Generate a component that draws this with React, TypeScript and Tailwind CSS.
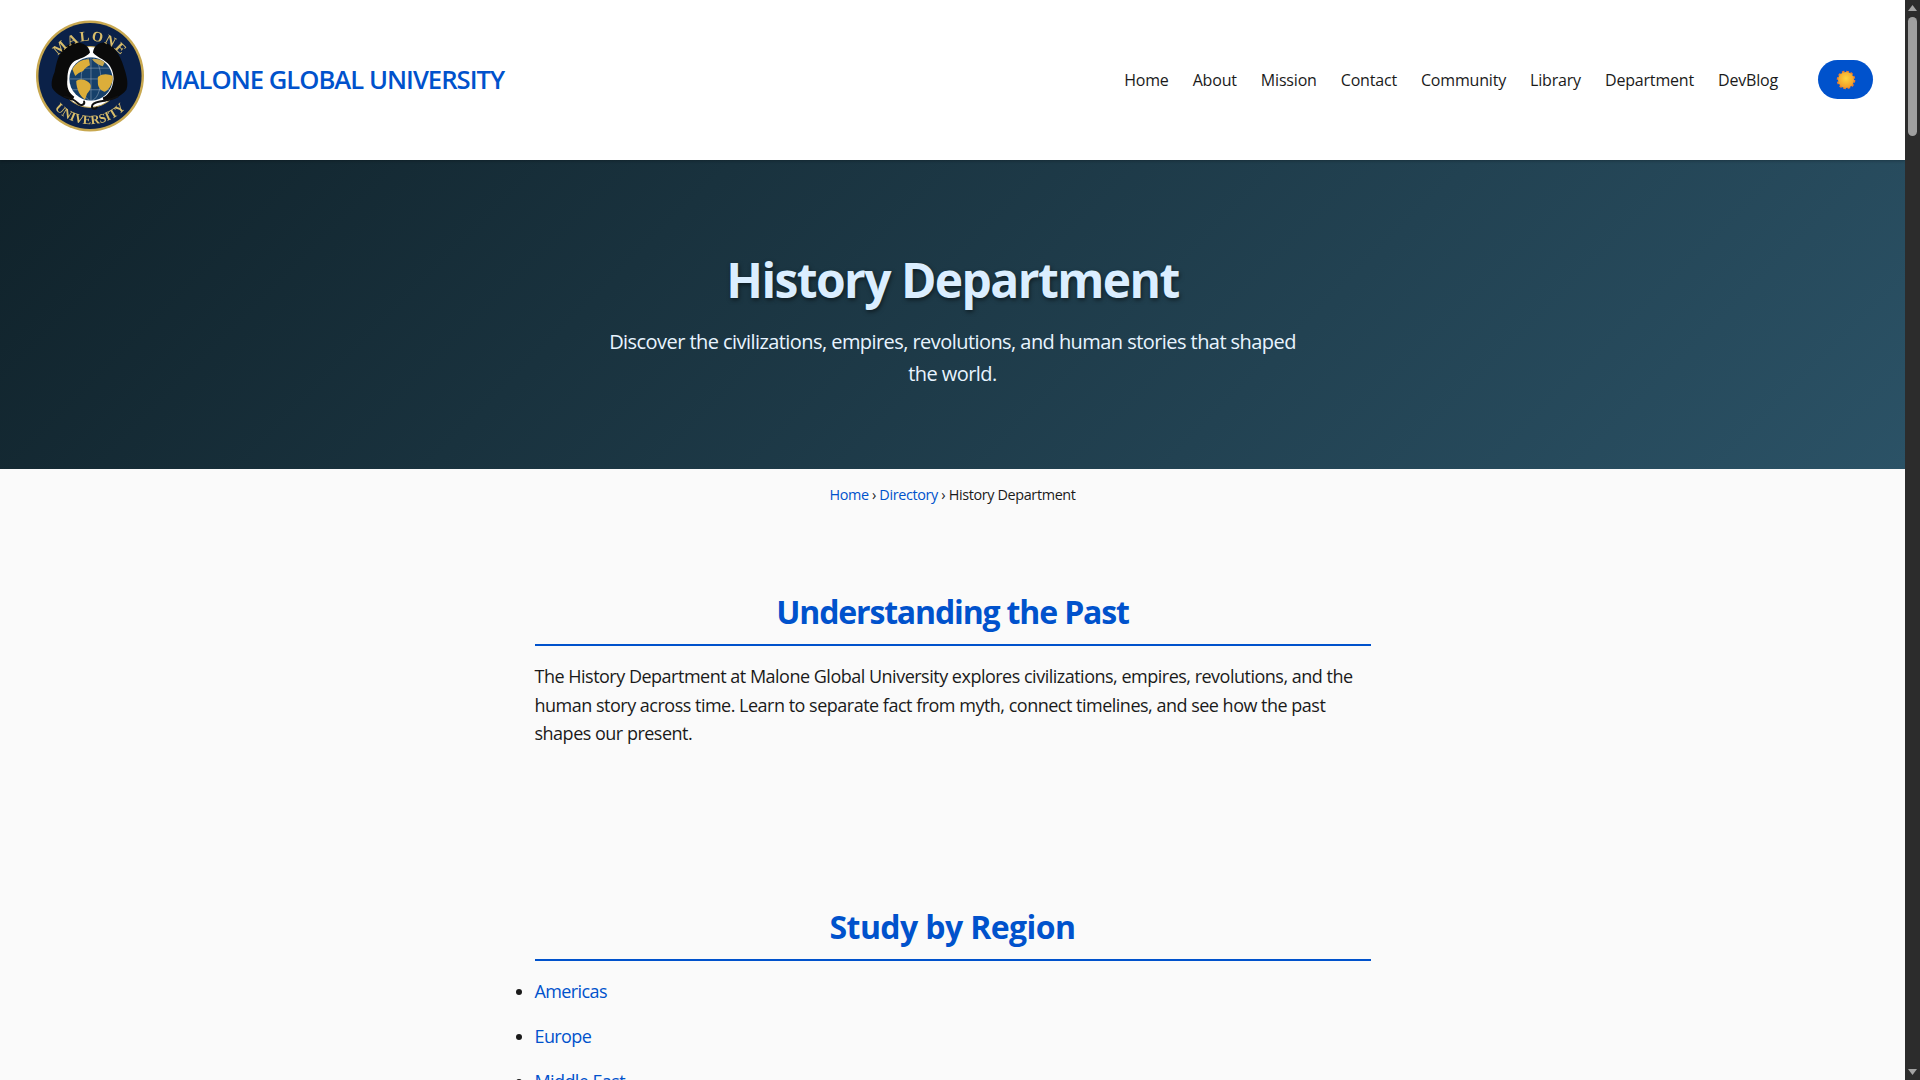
const navLinks = ["Home", "About", "Mission", "Contact", "Community", "Library", "Department", "DevBlog"];
const regions = ["Americas", "Europe", "Middle East"];

function Logo() {
  return (
    <svg width="110" height="112" viewBox="0 0 112 114" className="shrink-0 blur-[0.5px] mb-[9px]">
      <defs>
        <path id="logoTop" d="M 15 62 A 41 41 0 0 1 97 62" />
        <path id="logoBottom" d="M 7 57 A 49 49 0 0 0 105 57" />
      </defs>
      <ellipse cx="56" cy="57" rx="55" ry="56.5" fill="#c8a850" />
      <ellipse cx="56" cy="57" rx="52.5" ry="54" fill="#0b2148" />
      <circle cx="56" cy="58" r="31" fill="#fff" stroke="#c8a850" />
      {/* globe */}
      <circle cx="57" cy="60" r="22" fill="#16406a" />
      <g fill="none" stroke="#8aa0b4" strokeWidth="0.6">
        <ellipse cx="57" cy="60" rx="10" ry="22" />
        <path d="M57 38v44M35 60h44M38 49h38M38 71h38" />
      </g>
      <path d="M38 50c4-7 10-10 17-10l1 6c-3 1-5 3-7 6-3 1-6 3-8 5zM42 62c5-3 11-1 14 3 2 3 0 7-3 10l-2 6c-5-3-9-11-9-19zM64 58c5-4 11-3 15-1 1 6-3 14-8 16-4-1-7-5-7-9z" fill="#dcae3a" />
      <path d="M58 40c5-1 9 0 13 3l-2 4c-4-1-8-3-11-7z" fill="#c8a850" />
      {/* panthers */}
      <path d="M56 33C55 25 45 21 37 24C30 27 24 31 20 53C17 60 16 66 18 70C22 76 30 80 38 82L40 78C34 74 32 68 33 60C33 52 35 46 40 42C45 39 52 38 56 33Z" fill="#0a0a0a" />
      <path d="M59 33C60 25 68 21 74 24C82 28 88 38 92 53C94 60 95 66 93 71C88 78 78 82 70 83L69 79C75 76 79 70 80 60C80 54 78 48 74 44C69 39 63 38 59 33Z" fill="#0a0a0a" />
      {/* tails */}
      <g fill="none" stroke="#111" strokeWidth="2" strokeLinecap="round">
        <path d="M30 78c6 1 10 3 14 7 3 3 7 1 6-2" />
        <path d="M84 78c-6 3-12 4-18 5-5 1-8 3-8 5 0 3 4 3 5 1" />
      </g>
      <text fontFamily="'Liberation Serif', serif" fontSize="14.5" fontWeight="700" fill="#d8bd6a" letterSpacing="1.5">
        <textPath href="#logoTop" startOffset="50%" textAnchor="middle">MALONE</textPath>
      </text>
      <text fontFamily="'Liberation Serif', serif" fontSize="13" fontWeight="700" fill="#d8bd6a">
        <textPath href="#logoBottom" startOffset="50%" textAnchor="middle">UNIVERSITY</textPath>
      </text>
    </svg>
  );
}

function SunIcon() {
  return (
    <svg width="22" height="22" viewBox="0 0 22 22">
      <defs>
        <radialGradient id="sunFill" cx="50%" cy="40%" r="60%">
          <stop offset="0%" stopColor="#ffd640" />
          <stop offset="100%" stopColor="#f29a26" />
        </radialGradient>
      </defs>
      <circle cx="11" cy="11" r="8.4" fill="none" stroke="#ee7d2c" strokeWidth="1.8" strokeDasharray="2.6 1.8" />
      <circle cx="11" cy="11" r="8" fill="url(#sunFill)" />
    </svg>
  );
}

function Scrollbar() {
  return (
    <aside className="w-[15px] h-full shrink-0 bg-[#2c2c2c] flex flex-col items-center">
      <svg width="15" height="17" viewBox="0 0 15 17" className="shrink-0">
        <path d="M7.5 5 L12 11 L3 11 Z" fill="#a3a3a3" />
      </svg>
      <div className="w-[9px] h-[119px] rounded-full bg-[#9f9f9f]" />
      <div className="flex-1" />
      <svg width="15" height="17" viewBox="0 0 15 17" className="shrink-0">
        <path d="M3 6 L12 6 L7.5 12 Z" fill="#a3a3a3" />
      </svg>
    </aside>
  );
}

function SectionTitle({ children, className }: { children: string; className: string }) {
  return (
    <h2 className={`text-[32px] leading-[41px] font-bold text-[#0052cc] text-center pb-[12px] border-b-2 border-[#0052cc] ${className}`}>
      {children}
    </h2>
  );
}

export default function App() {
  return (
    <div className="h-screen flex overflow-hidden bg-[#fafafa] text-[#1a1a1a] font-['Open_Sans',sans-serif]">
      <div className="flex-1 min-w-0 overflow-hidden">
        <header className="h-[160px] bg-white flex items-center justify-between pl-[35px] pr-[32px] shadow-[0_1px_3px_rgba(0,0,0,0.25)] relative">
          <div className="flex items-center gap-[15px]">
            <Logo />
            <span className="text-[25.6px] font-semibold text-[#0052cc] tracking-[-0.97px]">MALONE GLOBAL UNIVERSITY</span>
          </div>
          <div className="flex items-center gap-[40px]">
            <nav className="flex items-center gap-[24px]">
              {navLinks.map((link) => (
                <a key={link} className="text-[16px] font-medium text-[#1a1a1a] tracking-[-0.18px]">{link}</a>
              ))}
            </nav>
            <button className="w-[55px] h-[39px] mb-[1px] rounded-[20px] bg-[#0052cc] flex items-center justify-center">
              <SunIcon />
            </button>
          </div>
        </header>

        <section className="h-[309px] bg-[linear-gradient(135deg,#10222a,#2b5266)] flex flex-col items-center pt-[85px]">
          <h1 className="text-[48px] leading-[70px] font-bold text-[#dbeeff] tracking-[-1.6px] [text-shadow:1px_2px_4px_rgba(0,0,0,0.5)]">History Department</h1>
          <p className="w-[700px] mt-[11px] text-[20px] leading-[32px] text-center text-[#e8f4ff] tracking-[-0.56px]">
            Discover the civilizations, empires, revolutions, and human stories that shaped the world.
          </p>
        </section>

        <div className="pt-[16px] text-center text-[14.4px] leading-[20px] tracking-[-0.36px]">
          <a className="text-[#0052cc]">Home</a> › <a className="text-[#0052cc]">Directory</a> › History Department
        </div>

        <main className="w-[836px] mx-auto pt-[86px]">
          <SectionTitle className="tracking-[-1.15px]">Understanding the Past</SectionTitle>
          <p className="mt-[16px] text-[18px] leading-[28.5px] tracking-[-0.5px]">
            The History Department at Malone Global University explores civilizations, empires, revolutions, and the human story across time. Learn to separate fact from myth, connect timelines, and see how the past shapes our present.
          </p>
          <div className="mt-[158px]">
            <SectionTitle className="tracking-[-0.6px]">Study by Region</SectionTitle>
            <ul className="list-disc mt-[16px] text-[18px] leading-[29px] tracking-[-0.6px] marker:text-[#1a1a1a]">
              {regions.map((region) => (
                <li key={region} className="mb-[16px]">
                  <a className="text-[#0052cc]">{region}</a>
                </li>
              ))}
            </ul>
          </div>
        </main>
      </div>
      <Scrollbar />
    </div>
  );
}
